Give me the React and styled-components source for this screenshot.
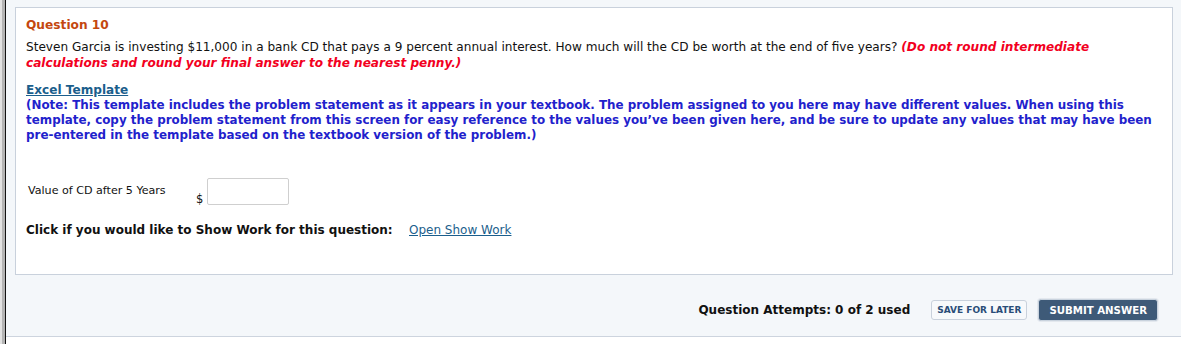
import styled, { createGlobalStyle } from "styled-components";

const GlobalStyle = createGlobalStyle`
  html, body {
    margin: 0;
    padding: 0;
    background: #fff;
  }
  body {
    font-family: Verdana, "DejaVu Sans", sans-serif;
    color: #000;
  }
`;

const Page = styled.div`
  display: flex;
  min-height: 344px;
`;

const Rail = styled.div`
  width: 2px;
  flex: 0 0 2px;
  background: #e2e2e2;
  border-right: 3px solid #b4b4b4;
  position: relative;

  &::after {
    content: "";
    position: absolute;
    top: 0;
    bottom: 0;
    right: -4px;
    width: 1px;
    background: #111;
  }
`;

const Main = styled.div`
  flex: 1;
  margin-left: 1px;
`;

const Panel = styled.section`
  background: #f4f7fa;
  border-bottom: 1px solid #cdd4de;
  padding: 7px 8px 0 9px;
  height: 329px;
`;

const Card = styled.div`
  background: #fff;
  border: 1px solid #c9d1dc;
  height: 257px;
  padding: 9px 10px 0 10px;
`;

const Title = styled.h2`
  margin: 0 0 6px;
  font-size: 12.2px;
  font-weight: bold;
  color: #c4470f;
  line-height: 16px;
`;

const Question = styled.p`
  margin: 0;
  font-size: 12.1px;
  line-height: 16px;
  color: #111;
`;

const Warn = styled.em`
  color: #f2001e;
  font-weight: bold;
`;

const TemplateBlock = styled.div`
  margin-top: 11px;
  font-size: 11.9px;
  line-height: 15px;
  font-weight: bold;
`;

const TemplateLink = styled.a`
  color: #1b5e8c;
  text-decoration: underline;
  display: block;
  line-height: 16px;
  font-size: 12.1px;
`;

const Note = styled.div`
  color: #1f22cc;
`;

const AnswerRow = styled.div`
  display: flex;
  align-items: flex-start;
  margin-top: 35px;
  padding-left: 2px;
`;

const Label = styled.span`
  font-size: 11.1px;
  line-height: 14px;
  padding-top: 6px;
  width: 168px;
  color: #111;
`;

const Dollar = styled.span`
  font-size: 11.5px;
  line-height: 14px;
  padding-top: 14px;
  color: #111;
`;

const Input = styled.input`
  width: 82px;
  height: 27px;
  box-sizing: border-box;
  border: 1px solid #cfcfcf;
  border-radius: 2px;
  margin: 0 0 0 4px;
`;

const WorkRow = styled.div`
  display: flex;
  align-items: baseline;
  margin-top: 17px;
  font-size: 12px;
  line-height: 14px;
`;

const WorkLabel = styled.span`
  font-weight: bold;
  color: #111;
  width: 383px;
`;

const WorkLink = styled.a`
  color: #1b5e8c;
  text-decoration: underline;
`;

const Footer = styled.div`
  display: flex;
  justify-content: flex-end;
  align-items: center;
  gap: 11px;
  padding: 24px 15px 0 0;
`;

const Attempts = styled.span`
  font-size: 12px;
  font-weight: bold;
  color: #111;
  margin-right: 10px;
`;

const Button = styled.button`
  font-family: Verdana, "DejaVu Sans", sans-serif;
  font-weight: bold;
  font-size: ${(p) => (p.$primary ? "10.2px" : "9px")};
  text-transform: uppercase;
  cursor: pointer;
  border-radius: 3px;
  padding: 0 ${(p) => (p.$primary ? "10px" : "5px")};
  height: ${(p) => (p.$primary ? "22px" : "20px")};
  color: ${(p) => (p.$primary ? "#fff" : "#2a4d78")};
  background: ${(p) => (p.$primary ? "#3e5a78" : "#f7f9fb")};
  border: 1px solid ${(p) => (p.$primary ? "#c9d3de" : "#c9d1dc")};
  box-shadow: ${(p) => (p.$primary ? "0 0 0 1px #e3e8ee" : "none")};
`;

export default function App() {
  return (
    <>
      <GlobalStyle />
      <Page>
        <Rail />
        <Main>
          <Panel>
            <Card>
              <Title>Question 10</Title>
              <Question>
                Steven Garcia is investing $11,000 in a bank CD that pays a 9 percent annual
                interest. How much will the CD be worth at the end of five years?{" "}
                <Warn>
                  (Do not round intermediate calculations and round your final answer to the
                  nearest penny.)
                </Warn>
              </Question>
              <TemplateBlock>
                <TemplateLink href="#">Excel Template</TemplateLink>
                <Note>
                  (Note: This template includes the problem statement as it appears in your
                  textbook. The problem assigned to you here may have different values. When
                  using this template, copy the problem statement from this screen for easy
                  reference to the values you’ve been given here, and be sure to update any
                  values that may have been pre-entered in the template based on the textbook
                  version of the problem.)
                </Note>
              </TemplateBlock>
              <AnswerRow>
                <Label>Value of CD after 5 Years</Label>
                <Dollar>$</Dollar>
                <Input type="text" />
              </AnswerRow>
              <WorkRow>
                <WorkLabel>Click if you would like to Show Work for this question:</WorkLabel>
                <WorkLink href="#">Open Show Work</WorkLink>
              </WorkRow>
            </Card>
            <Footer>
              <Attempts>Question Attempts: 0 of 2 used</Attempts>
              <Button>Save for later</Button>
              <Button $primary>Submit answer</Button>
            </Footer>
          </Panel>
        </Main>
      </Page>
    </>
  );
}
